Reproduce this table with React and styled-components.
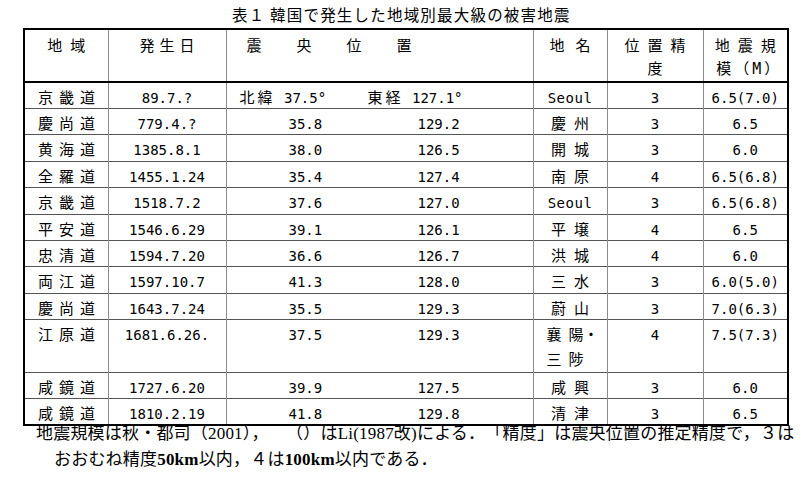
import React from 'react'
import styled, { createGlobalStyle } from 'styled-components'

const GlobalStyle = createGlobalStyle`
  html, body {
    margin: 0;
    padding: 0;
    background: #fff;
  }
  body {
    color: #000;
    font-family: "Noto Sans CJK JP", sans-serif;
  }
`

const rows = [
  { region: '京畿道', date: '89.7.?', lat: '37.5', lon: '127.1', place: 'Seoul', acc: '3', mag: '6.5(7.0)', first: true },
  { region: '慶尚道', date: '779.4.?', lat: '35.8', lon: '129.2', place: '慶州', acc: '3', mag: '6.5' },
  { region: '黄海道', date: '1385.8.1', lat: '38.0', lon: '126.5', place: '開城', acc: '3', mag: '6.0' },
  { region: '全羅道', date: '1455.1.24', lat: '35.4', lon: '127.4', place: '南原', acc: '4', mag: '6.5(6.8)' },
  { region: '京畿道', date: '1518.7.2', lat: '37.6', lon: '127.0', place: 'Seoul', acc: '3', mag: '6.5(6.8)' },
  { region: '平安道', date: '1546.6.29', lat: '39.1', lon: '126.1', place: '平壌', acc: '4', mag: '6.5' },
  { region: '忠清道', date: '1594.7.20', lat: '36.6', lon: '126.7', place: '洪城', acc: '4', mag: '6.0' },
  { region: '両江道', date: '1597.10.7', lat: '41.3', lon: '128.0', place: '三水', acc: '3', mag: '6.0(5.0)' },
  { region: '慶尚道', date: '1643.7.24', lat: '35.5', lon: '129.3', place: '蔚山', acc: '3', mag: '7.0(6.3)' },
  { region: '江原道', date: '1681.6.26.', lat: '37.5', lon: '129.3', place: ['襄陽・', '三陟'], acc: '4', mag: '7.5(7.3)', tall: true },
  { region: '咸鏡道', date: '1727.6.20', lat: '39.9', lon: '127.5', place: '咸興', acc: '3', mag: '6.0' },
  { region: '咸鏡道', date: '1810.2.19', lat: '41.8', lon: '129.8', place: '清津', acc: '3', mag: '6.5' },
]

const Page = styled.div`
  width: 811px;
  height: 481px;
  overflow: hidden;
`

const Title = styled.div`
  height: 28px;
  line-height: 28px;
  padding-left: 232px;
  font-size: 15.5px;
  letter-spacing: 1.2px;
  white-space: nowrap;
`

const Table = styled.table`
  margin-left: 23px;
  width: 766px;
  border-collapse: collapse;
  table-layout: fixed;
  border: 2px solid #000;
  font-family: "DejaVu Sans Mono", "Noto Sans CJK JP", monospace;
  font-size: 14px;
`

const HeadRow = styled.tr`
  height: 53px;
`

const Row = styled.tr`
  height: ${p => (p.$tall ? 52.8 : 26.4)}px;
`

const HeadCell = styled.th`
  font-weight: normal;
  vertical-align: top;
  padding: 5px 0 0 ${p => (p.$indent != null ? p.$indent : p.$ls ?? 8)}px;
  line-height: 23px;
  font-size: 15px;
  letter-spacing: ${p => p.$ls ?? 8}px;
  text-align: ${p => p.$align || 'center'};
  white-space: nowrap;
  border-left: 1px solid #8c8c8c;
  border-bottom: 2px solid #000;
`

const Narrow = styled.span`
  letter-spacing: 3px;
`

const Cell = styled.td`
  vertical-align: top;
  padding: ${p => (p.$tall ? '3px 0 0 13px' : '5px 0 0')};
  line-height: ${p => (p.$tall ? 24.4 : 20)}px;
  text-align: ${p => (p.$tall ? 'left' : 'center')};
  white-space: nowrap;
  border-left: 1px solid #8c8c8c;
  border-top: 1px solid #555;
`

const RegionCell = styled(Cell)`
  text-align: left;
  padding-left: 13px;
`

const EpiCell = styled(Cell)`
  text-align: left;
  padding-left: ${p => (p.$first ? 13 : 62)}px;
`

const Coord = styled.span`
  display: inline-block;
  width: ${p => (p.$first ? 128 : 129)}px;
`

const Jp = styled.span`
  font-size: 15px;
  letter-spacing: ${p => p.$ls}px;
  padding-left: ${p => (p.$pad ? p.$ls : 0)}px;
`

const Label = styled.span`
  font-size: 15px;
  letter-spacing: 3px;
`

const Latin = styled.span`
  letter-spacing: 0.5px;
`

const Note = styled.div`
  display: flex;
  flex-direction: column;
  gap: 10px;
  font-family: "Liberation Serif", "Noto Sans CJK JP", serif;
  font-size: 17px;
  letter-spacing: 0.2px;
`

const NoteLine = styled.div`
  line-height: 16px;
  padding-left: ${p => p.$indent}px;
  white-space: nowrap;
`

const isLatin = s => /^[A-Za-z]+$/.test(s)

const Place = ({ value }) => {
  if (Array.isArray(value)) {
    const [top, bottom] = value
    return (
      <>
        <div><Jp $ls={7}>{top[0]}</Jp><Jp $ls={0}>{top.slice(1)}</Jp></div>
        <div><Jp $ls={7}>{bottom}</Jp></div>
      </>
    )
  }
  if (isLatin(value)) return <Latin>{value}</Latin>
  return <Jp $ls={8} $pad>{value}</Jp>
}

export default function App() {
  return (
    <Page>
      <GlobalStyle />
      <Title>表１ 韓国で発生した地域別最大級の被害地震</Title>
      <Table>
        <colgroup>
          <col style={{ width: 84 }} />
          <col style={{ width: 118 }} />
          <col style={{ width: 307 }} />
          <col style={{ width: 74 }} />
          <col style={{ width: 96 }} />
          <col style={{ width: 85 }} />
        </colgroup>
        <thead>
          <HeadRow>
            <HeadCell $ls={8}>地域</HeadCell>
            <HeadCell $ls={5}>発生日</HeadCell>
            <HeadCell $ls={10} $align="left" $indent={20}>震　央　位　置</HeadCell>
            <HeadCell $ls={11}>地名</HeadCell>
            <HeadCell $ls={8}>位置精<br />度</HeadCell>
            <HeadCell $ls={8}>地震規<br /><Narrow>模（M）</Narrow></HeadCell>
          </HeadRow>
        </thead>
        <tbody>
          {rows.map((r, i) => (
            <Row key={i} $tall={r.tall}>
              <RegionCell><Jp $ls={6}>{r.region}</Jp></RegionCell>
              <Cell>{r.date}</Cell>
              <EpiCell $first={r.first}>
                {r.first ? (
                  <>
                    <Coord $first><Label>北緯</Label> {r.lat}°</Coord>
                    <Label>東経</Label> {r.lon}°
                  </>
                ) : (
                  <>
                    <Coord>{r.lat}</Coord>
                    {r.lon}
                  </>
                )}
              </EpiCell>
              <Cell $tall={r.tall}><Place value={r.place} /></Cell>
              <Cell>{r.acc}</Cell>
              <Cell>{r.mag}</Cell>
            </Row>
          ))}
        </tbody>
      </Table>
      <Note>
        <NoteLine $indent={36}>
          地震規模は秋・都司（2001），　　（）はLi(1987改)による．　「精度」は震央位置の推定精度で，３は
        </NoteLine>
        <NoteLine $indent={54}>
          おおむね精度<b>50km</b>以内，４は<b>100km</b>以内である．
        </NoteLine>
      </Note>
    </Page>
  )
}
